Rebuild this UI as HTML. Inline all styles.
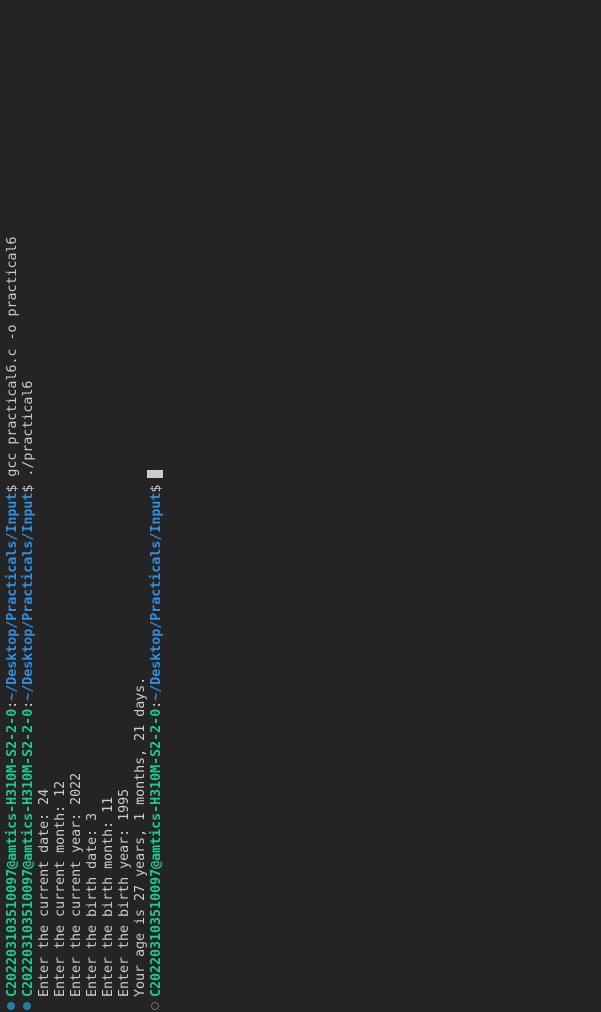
<!DOCTYPE html>
<html><head><meta charset="utf-8"><style>
html,body{margin:0;padding:0;background:#242424;width:601px;height:1012px;overflow:hidden}
#t{position:absolute;left:0;top:0;width:1012px;height:601px;transform-origin:0 0;transform:translateY(1012px) rotate(-90deg);background:#242424;font-family:"DejaVu Sans Mono","Liberation Mono",monospace;font-size:13.3px;color:#cccccc}
.l{position:absolute;left:15px;height:16px;line-height:16px;white-space:pre}
.g{color:#1ccc8f;font-weight:bold}.b{color:#2f8fe0;font-weight:bold}
.d{position:absolute;left:2px;width:8px;height:8px;border-radius:50%;background:#1b81a8}
.h{background:none;border:1px solid #6b6b6b;width:6px;height:6px}
.c{position:absolute;left:534px;top:147px;width:8px;height:16px;background:#cccccc}
</style></head><body><div id="t">
<div class="d" style="top:7px"></div>
<div class="d" style="top:23px"></div>
<div class="d h" style="top:151px"></div>
<div class="l" style="top:5px"><span class="g">C202203103510097@amtics-H310M-S2-2-0</span>:<span class="b">~/Desktop/Practicals/Input</span>$ gcc practical6.c -o practical6</div>
<div class="l" style="top:21px"><span class="g">C202203103510097@amtics-H310M-S2-2-0</span>:<span class="b">~/Desktop/Practicals/Input</span>$ ./practical6</div>
<div class="l" style="top:37px">Enter the current date: 24</div>
<div class="l" style="top:53px">Enter the current month: 12</div>
<div class="l" style="top:69px">Enter the current year: 2022</div>
<div class="l" style="top:85px">Enter the birth date: 3</div>
<div class="l" style="top:101px">Enter the birth month: 11</div>
<div class="l" style="top:117px">Enter the birth year: 1995</div>
<div class="l" style="top:133px">Your age is 27 years, 1 months, 21 days.</div>
<div class="l" style="top:149px"><span class="g">C202203103510097@amtics-H310M-S2-2-0</span>:<span class="b">~/Desktop/Practicals/Input</span>$ </div>
<div class="c"></div>
</div></body></html>
